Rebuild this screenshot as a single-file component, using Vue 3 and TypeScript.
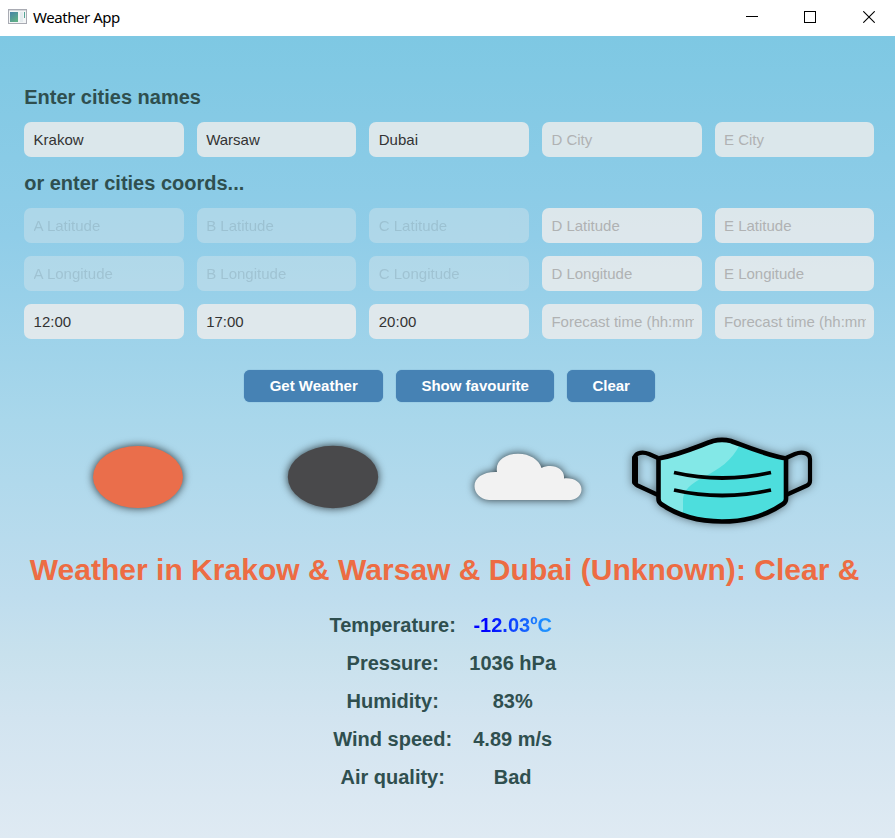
<script setup lang="ts">
interface Field {
  label: string
  value?: string
  disabled?: boolean
}
interface Reading {
  label: string
  value: string
  cold?: boolean
}

const letters = ['A', 'B', 'C', 'D', 'E']
const cityValues = ['Krakow', 'Warsaw', 'Dubai']
const timeValues = ['12:00', '17:00', '20:00']

const cities: Field[] = letters.map((l, i) => ({ label: `${l} City`, value: cityValues[i] }))
const coordRows: Field[][] = [
  letters.map((l, i) => ({ label: `${l} Latitude`, disabled: i < 3 })),
  letters.map((l, i) => ({ label: `${l} Longitude`, disabled: i < 3 })),
  letters.map((_, i) => ({ label: 'Forecast time (hh:mm)', value: timeValues[i] })),
]
const buttons = [
  { id: 'get', text: 'Get Weather' },
  { id: 'fav', text: 'Show favourite' },
  { id: 'clear', text: 'Clear' },
]
const readings: Reading[] = [
  { label: 'Temperature:', value: '-12.03ºC', cold: true },
  { label: 'Pressure:', value: '1036 hPa' },
  { label: 'Humidity:', value: '83%' },
  { label: 'Wind speed:', value: '4.89 m/s' },
  { label: 'Air quality:', value: 'Bad' },
]
</script>

<template>
  <div class="window">
    <header class="titlebar">
      <svg class="app-icon" width="19" height="16" viewBox="0 0 19 16" shape-rendering="crispEdges">
        <defs>
          <linearGradient id="appShade" x1="0" y1="0" x2="0.6" y2="1">
            <stop offset="0" stop-color="#4682a8" />
            <stop offset="1" stop-color="#5fae86" />
          </linearGradient>
        </defs>
        <rect x="0.5" y="0.5" width="18" height="14" fill="#f3f5f6" stroke="#a9abb3" />
        <rect x="1" y="1" width="17" height="1" fill="#d5d7db" />
        <rect x="2" y="3" width="8" height="10" fill="url(#appShade)" />
        <rect x="12" y="3" width="3" height="10" fill="#e4ebee" />
        <rect x="16" y="3" width="1" height="6" fill="#55a596" />
      </svg>
      <span class="title">Weather App</span>
      <div class="controls">
        <svg width="12" height="12" viewBox="0 0 12 12"><rect y="5" width="12" height="1" /></svg>
        <svg width="12" height="12" viewBox="0 0 12 12"><rect x=".5" y=".5" width="11" height="11" fill="none" stroke="#000" /></svg>
        <svg width="12" height="12" viewBox="0 0 12 12"><path d="M.3.3 11.7 11.7M11.7.3.3 11.7" stroke="#000" stroke-width="1.1" /></svg>
      </div>
    </header>

    <main class="content">
      <h2 class="heading">Enter cities names</h2>
      <div class="row">
        <input v-for="f in cities" :key="f.label" class="field" :placeholder="f.label" :value="f.value" />
      </div>
      <h2 class="heading second">or enter cities coords...</h2>
      <div class="rows">
        <div v-for="(r, ri) in coordRows" :key="ri" class="row">
          <input
            v-for="(f, i) in r"
            :key="i"
            class="field"
            :placeholder="f.label"
            :value="f.value"
            :disabled="f.disabled"
          />
        </div>
      </div>

      <div class="buttons">
        <button v-for="b in buttons" :key="b.id" :class="['btn', b.id]">{{ b.text }}</button>
      </div>

      <div class="icons">
        <svg class="sun" width="92" height="64" viewBox="0 0 92 64">
          <ellipse cx="46" cy="32" rx="45" ry="31" fill="#ea6e4b" />
        </svg>
        <svg class="night" width="92" height="64" viewBox="0 0 92 64">
          <ellipse cx="46" cy="32" rx="45.2" ry="31.2" fill="#49494b" />
        </svg>
        <svg class="cloud" width="108" height="48" viewBox="0 0 108 48">
          <path
            d="M15 47C6 46 .5 40 .5 33C.5 25 9 18.500 23 19C21 8 31 .8 44 .8C56 .8 65 7 67.500 15C78 10 91 15 90 25.500C100 24.500 107.500 29.500 107.500 36.500C107.500 42 103 46 97 47Z"
            fill="#f2f2f2"
          />
        </svg>
        <svg class="mask" width="182" height="86" viewBox="0 0 182 86">
          <path
            d="M27 20 18 16Q12 13.500 7 15.500Q3.500 17 3.500 21V43Q3.500 46 6.500 47.500L27 57"
            fill="none"
            stroke="#000"
            stroke-width="4.200"
          />
          <path d="M4 20V44" stroke="#000" stroke-width="6" stroke-linecap="round" />
          <path
            d="M155 20 164 16Q170 13.500 175 15.500Q179 17 179 21V43Q179 46 176 47.500L155 57"
            fill="none"
            stroke="#000"
            stroke-width="4.200"
          />
          <path
            d="M27.500 20.500C50 16.500 70 7 82 3Q91 .8 100 3C114 8 133 16.500 155 20.500V61Q155 64 152 66C136 77 114 83.500 91 83.500C68 83.500 46 77 30 66Q27.500 64 27.500 61Z"
            fill="#4ddedd"
          />
          <path
            d="M27.500 20.500C50 16.500 70 7 82 3Q91 .8 100 3L109 6C101 23 88 31 73 39C59 46 53 52 52 61V77Q39 72 30 66Q27.500 64 27.500 61Z"
            fill="#83e8e7"
          />
          <path
            d="M27.500 20.500C50 16.500 70 7 82 3Q91 .8 100 3C114 8 133 16.500 155 20.500V61Q155 64 152 66C136 77 114 83.500 91 83.500C68 83.500 46 77 30 66Q27.500 64 27.500 61Z"
            fill="none"
            stroke="#000"
            stroke-width="4.600"
            stroke-linejoin="round"
          />
          <path d="M43 34.500Q91 45.500 140 34.500M43 52Q91 63 140 52" fill="none" stroke="#000" stroke-width="3.800" />
        </svg>
      </div>

      <h1 class="summary">Weather in Krakow &amp; Warsaw &amp; Dubai (Unknown): Clear &amp;</h1>

      <dl class="readings">
        <template v-for="r in readings" :key="r.label">
          <dt>{{ r.label }}</dt>
          <dd><span :class="{ cold: r.cold }">{{ r.value }}</span></dd>
        </template>
      </dl>
    </main>
  </div>
</template>

<style>
body {
  margin: 0;
  overflow: hidden;
}
</style>

<style scoped>
.window {
  width: 895px;
  height: 838px;
  display: flex;
  flex-direction: column;
  font-family: "Liberation Sans", Arial, sans-serif;
}
.titlebar {
  height: 36px;
  flex: none;
  box-sizing: border-box;
  display: flex;
  align-items: center;
  padding: 0 20px 0 8px;
  background: #fff;
}
.app-icon {
  margin-top: -2px;
}
.title {
  margin: -2px 0 0 6px;
  font: 15px/20px "Noto Sans", sans-serif;
  letter-spacing: -0.45px;
  color: #000;
}
.controls {
  margin-left: auto;
  display: flex;
  gap: 46px;
  padding-bottom: 2px;
}
.controls svg:last-child {
  margin-left: 1px;
}
.content {
  flex: 1;
  display: flex;
  flex-direction: column;
  padding: 49px 20.8px 0 24.2px;
  background: linear-gradient(#7ec8e3 0%, #90cde8 25%, #a9d7eb 48%, #bfddee 70%, #c8e1ed 77%, #d2e4f0 85%, #dfeaf3 100%);
}
.heading {
  margin: 0 0 13px;
  font-size: 20px;
  line-height: 24px;
  font-weight: bold;
  color: #2f4f4f;
}
.heading.second {
  margin-top: 14px;
}
.rows {
  display: flex;
  flex-direction: column;
  gap: 13px;
}
.row {
  display: grid;
  grid-template-columns: repeat(5, minmax(0, 1fr));
  gap: 13px;
}
.field {
  width: 100%;
  min-width: 0;
  height: 35px;
  box-sizing: border-box;
  padding: 0 8px 0 9.400px;
  border: 0;
  border-radius: 7px;
  background: rgba(240, 237, 236, 0.8);
  font: 15px "Liberation Sans", Arial, sans-serif;
  color: #333;
  outline: none;
}
.field::placeholder {
  color: #b0b2b3;
  opacity: 1;
}
.field:disabled {
  opacity: 0.4;
}
.buttons {
  display: flex;
  justify-content: center;
  gap: 13px;
  margin: 31px 0 0 1px;
}
.btn {
  height: 32px;
  padding: 0 0 1px;
  border: 0;
  border-radius: 6px;
  background: #4682b4;
  box-shadow: 0 0 1px #4682b4;
  color: #fff;
  font: bold 15px "Liberation Sans", Arial, sans-serif;
}
.get {
  width: 139px;
}
.fav {
  width: 158px;
}
.clear {
  width: 88px;
}
.icons {
  display: flex;
  align-items: center;
  height: 86px;
  margin: 35px 0 0 68px;
}
.icons svg {
  overflow: visible;
  flex: none;
  margin-bottom: 6px;
  filter: drop-shadow(0 0 4px rgba(0, 0, 0, 0.75));
}
.icons .night {
  margin-left: 103px;
}
.icons .cloud {
  margin-left: 95px;
}
.icons .mask {
  margin: 1px 0 0 49px;
  filter: drop-shadow(0 0 4px rgba(0, 0, 0, 0.5));
}
.summary {
  margin: 27px 0 0 5.500px;
  font-size: 30px;
  line-height: 40px;
  letter-spacing: 0.025px;
  font-weight: bold;
  white-space: nowrap;
  color: #ed6c43;
}
.readings {
  display: grid;
  grid-template-columns: 128px 88px;
  column-gap: 12px;
  grid-auto-rows: 38px;
  justify-content: center;
  margin: 16px 0 0;
  padding-right: 13px;
  font-size: 20px;
  line-height: 38px;
  font-weight: bold;
  text-align: center;
  white-space: nowrap;
  color: #2f4f4f;
}
.readings dd {
  margin: 0;
}
.cold {
  background: linear-gradient(90deg, #00f 15%, #1e90ff 90%);
  background-clip: text;
  -webkit-background-clip: text;
  color: transparent;
}
</style>
